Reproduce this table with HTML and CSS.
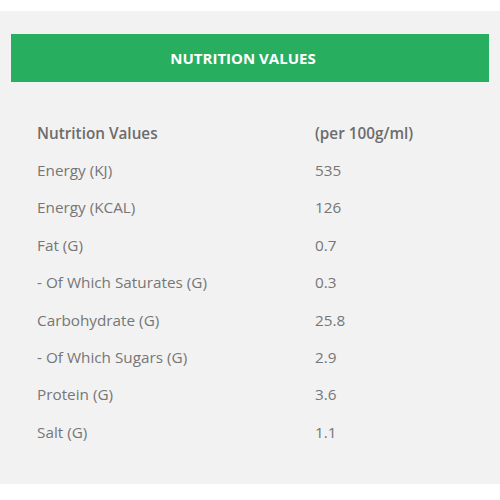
FILE: index.html
```html
<!DOCTYPE html>
<html>
<head>
<meta charset="utf-8">
<link rel="stylesheet" href="styles.css">
</head>
<body>
<div class="panel">
  <div class="bar">NUTRITION VALUES</div>
  <table class="nt">
    <tr class="head"><td>Nutrition Values</td><td>(per 100g/ml)</td></tr>
    <tr><td>Energy (KJ)</td><td>535</td></tr>
    <tr><td>Energy (KCAL)</td><td>126</td></tr>
    <tr><td>Fat (G)</td><td>0.7</td></tr>
    <tr><td>- Of Which Saturates (G)</td><td>0.3</td></tr>
    <tr><td>Carbohydrate (G)</td><td>25.8</td></tr>
    <tr><td>- Of Which Sugars (G)</td><td>2.9</td></tr>
    <tr><td>Protein (G)</td><td>3.6</td></tr>
    <tr><td>Salt (G)</td><td>1.1</td></tr>
  </table>
</div>
</body>
</html>
```
FILE: styles.css
```css
html, body {
  margin: 0;
  padding: 0;
  background: #ffffff;
}
body {
  font-family: "Open Sans", "Liberation Sans", sans-serif;
  padding-top: 11px;
}
.panel {
  background: #f2f2f2;
  padding: 23px 11px 33px;
  height: 473px;
  box-sizing: border-box;
}
.bar {
  background: #27ae5f;
  color: #ffffff;
  font-weight: 700;
  font-size: 15px;
  height: 48px;
  line-height: 48px;
  text-align: center;
  padding-right: 14px;
}
.nt {
  border-collapse: collapse;
  margin: 32px 0 0 26px;
  font-size: 15.3px;
  color: #767676;
}
.nt td {
  padding: 0;
  height: 37.4px;
  line-height: 20px;
  vertical-align: middle;
}
.nt td:first-child {
  width: 278px;
}
.nt .head td {
  font-weight: 600;
  color: #6c6c6c;
}
```
